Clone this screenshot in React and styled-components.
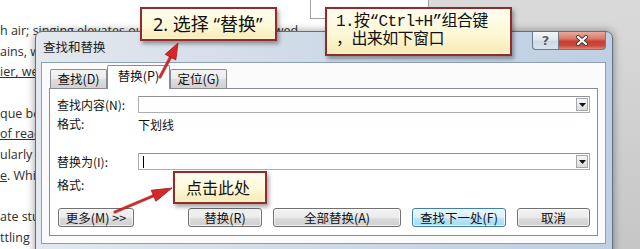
import React from "react";
import styled, { createGlobalStyle } from "styled-components";

const GlobalStyle = createGlobalStyle`
  html, body { margin: 0; padding: 0; }
  body { background: #d6d6d6; }
`;

const Stage = styled.div`
  position: relative;
  width: 640px;
  height: 249px;
  overflow: hidden;
  display: flex;
  background: #d6d6d6;
`;

const Doc = styled.div`
  width: 428px;
  flex: none;
  background: #fff;
  padding-top: 21px;
  font-family: "Open Sans", "Liberation Sans", sans-serif;
  font-size: 12.5px;
  line-height: 20.7px;
  color: #2e2e2e;
  white-space: nowrap;
  overflow: hidden;
`;

const DocLine = styled.div`
  height: 20.7px;
`;

const U = styled.span`
  text-decoration: underline;
`;

const Gray = styled.div`
  flex: 1;
  background: linear-gradient(180deg, #dadada, #c6c6c6);
`;

const TextFrame = styled.div`
  position: absolute;
  left: 310px;
  top: -1px;
  width: 117px;
  height: 18px;
  background: #fff;
  border: 1px solid #a2a2a2;
`;

const Dialog = styled.div`
  position: absolute;
  left: 35px;
  top: 31px;
  width: 578px;
  height: 228px;
  box-sizing: border-box;
  display: flex;
  flex-direction: column;
  padding: 0 6px 0 5px;
  border: 1px solid #5d7084;
  border-radius: 7px 7px 0 0;
  background: linear-gradient(90deg, #e3e8ee 0%, #d4dee9 35%, #c6d5e5 70%, #bfd0e3 100%);
  box-shadow: 0 0 9px rgba(0, 0, 0, 0.4);
  font-family: "Noto Sans CJK SC", "Noto Sans", sans-serif;
  font-size: 12px;
  color: #111;
`;

const TitleBar = styled.div`
  height: 30px;
  display: flex;
  align-items: flex-start;
`;

const Title = styled.div`
  margin: 7px 0 0 2px;
  font-size: 12.5px;
  line-height: 16px;
  color: #1c1c1c;
`;

const CaptionButtons = styled.div`
  margin-left: auto;
  display: flex;
`;

const CaptionButton = styled.div`
  height: 18px;
  box-sizing: border-box;
  display: flex;
  align-items: center;
  justify-content: center;
  border: 1px solid #6b7c90;
  border-top: none;
  width: ${(p) => (p.$close ? "47px" : "27px")};
  border-radius: ${(p) => (p.$close ? "0 0 4px 0" : "0 0 0 4px")};
  border-left: ${(p) => (p.$close ? "none" : "1px solid #6b7c90")};
  background: ${(p) =>
    p.$close
      ? "linear-gradient(180deg, #e9aa9a 0%, #d9786a 40%, #c73f31 55%, #c94a3c 80%, #dc8676 100%)"
      : "linear-gradient(180deg, #f3f6f9 0%, #e2e8ef 45%, #cfd9e4 55%, #dbe3ec 100%)"};
  color: #55606d;
  font-family: "DejaVu Sans", sans-serif;
  font-weight: bold;
  font-size: 13px;
  text-shadow: 0 0 2px #fff;
`;

const Client = styled.div`
  height: 182px;
  box-sizing: border-box;
  background: #fbfbfb;
  border: 1px solid #8c9fb4;
  padding: 2px 7px 7px 7px;
  display: flex;
  flex-direction: column;
`;

const TabStrip = styled.div`
  display: flex;
  align-items: flex-end;
  height: 24px;
  margin: 0 0 -1px 1px;
  position: relative;
  z-index: 1;
`;

const Tab = styled.div`
  box-sizing: border-box;
  width: ${(p) => p.$w}px;
  height: ${(p) => (p.$active ? "24px" : "19px")};
  margin-bottom: ${(p) => (p.$active ? "0" : "1px")};
  border: 1px solid #898c95;
  border-bottom: none;
  border-radius: 2px 2px 0 0;
  background: ${(p) =>
    p.$active
      ? "#fff"
      : "linear-gradient(180deg, #f4f4f4 0%, #ebebeb 50%, #dedede 50%, #d2d2d2 100%)"};
  display: flex;
  align-items: center;
  justify-content: center;
  padding-bottom: ${(p) => (p.$active ? "3px" : "0")};
  line-height: 14px;
  font-size: 12.5px;
`;

const Panel = styled.div`
  height: 148px;
  box-sizing: border-box;
  border: 1px solid #898c95;
  background: #fff;
  padding: 7px 7px 8px 7px;
  display: flex;
  flex-direction: column;
`;

const FieldRow = styled.div`
  display: flex;
  align-items: center;
  height: 17px;
  margin-top: ${(p) => p.$top || 0}px;
`;

const FormatRow = styled.div`
  display: flex;
  align-items: center;
  height: ${(p) => p.$h}px;
`;

const Label = styled.div`
  width: 81px;
  flex: none;
  line-height: 14px;
`;

const Input = styled.div`
  flex: 1;
  height: 17px;
  box-sizing: border-box;
  border: 1px solid #a9adb5;
  border-top-color: #8d929c;
  background: #fff;
  display: flex;
  align-items: center;
  padding: 0 1px 0 4px;
`;

const Caret = styled.div`
  width: 1px;
  height: 12px;
  background: #000;
`;

const DropButton = styled.div`
  margin-left: auto;
  width: 12px;
  height: 13px;
  box-sizing: border-box;
  border: 1px solid #a4a8ae;
  background: linear-gradient(180deg, #f7f7f7, #dcdcdc);
  display: flex;
  align-items: center;
  justify-content: center;
`;

const ButtonRow = styled.div`
  display: flex;
  margin-top: 8px;
  height: 19px;
`;

const ButtonGroup = styled.div`
  margin-left: auto;
  display: flex;
  gap: 11px;
`;

const Button = styled.div`
  width: ${(p) => p.$w}px;
  height: 19px;
  box-sizing: border-box;
  margin-left: ${(p) => p.$ml || 0}px;
  border: 1px solid ${(p) => (p.$default ? "#3c7fb1" : "#707070")};
  border-radius: 3px;
  background: ${(p) =>
    p.$default
      ? "linear-gradient(180deg, #eaf6fd 0%, #d9f0fc 50%, #bee6fd 50%, #a7d9f5 100%)"
      : "linear-gradient(180deg, #f2f2f2 0%, #ebebeb 50%, #dddddd 50%, #cfcfcf 100%)"};
  box-shadow: inset 0 0 0 1px rgba(255, 255, 255, 0.7);
  display: flex;
  align-items: center;
  justify-content: center;
  line-height: 14px;
  font-size: 12.5px;
  white-space: nowrap;
`;

const Callout = styled.div`
  position: absolute;
  left: ${(p) => p.$x}px;
  top: ${(p) => p.$y}px;
  width: ${(p) => p.$w}px;
  height: ${(p) => p.$h}px;
  box-sizing: border-box;
  border: 2px solid #962a2a;
  background: linear-gradient(180deg, #fffef0 0%, #fdf8d6 55%, #f6ebb4 100%);
  box-shadow: 2px 3px 4px rgba(0, 0, 0, 0.35), inset 0 0 3px rgba(255, 255, 255, 0.9);
  color: #111;
  font-family: "Noto Sans", "Noto Sans CJK SC", sans-serif;
  font-size: ${(p) => p.$fs}px;
  line-height: ${(p) => p.$lh}px;
  padding: ${(p) => p.$pad};
  white-space: nowrap;
  z-index: 3;
`;

const MonoCallout = styled(Callout)`
  font-family: "Liberation Mono", "Noto Sans CJK SC", monospace;
  letter-spacing: -0.6px;
`;

const Arrows = styled.svg`
  position: absolute;
  left: 0;
  top: 0;
  z-index: 4;
  pointer-events: none;
`;

// only the fragments that show beside the dialog
const docLines = [
  <>h air; singing elevates our spirits and lifts up bowed</>,
  <>ains, w</>,
  <U>ier, we</U>,
  null,
  <>que be</>,
  <U>of read</U>,
  <>ularly o</>,
  <><U>e</U>. Whi</>,
  null,
  <>ate stu</>,
  <>ttling</>,
];

function Arrow({ tail, tip, head = 16, half = 6 }) {
  const dx = tip[0] - tail[0];
  const dy = tip[1] - tail[1];
  const len = Math.hypot(dx, dy);
  const ux = dx / len;
  const uy = dy / len;
  const bx = tip[0] - ux * head;
  const by = tip[1] - uy * head;
  const px = -uy * half;
  const py = ux * half;
  const pts = `${tip[0]},${tip[1]} ${bx + px},${by + py} ${bx - px},${by - py}`;
  return (
    <g>
      <line x1={tail[0]} y1={tail[1]} x2={bx} y2={by} stroke="#7a1010" strokeWidth="3.4" strokeLinecap="round" opacity="0.5" />
      <line x1={tail[0]} y1={tail[1]} x2={bx} y2={by} stroke="#d42424" strokeWidth="2.2" strokeLinecap="round" />
      <polygon points={pts} fill="#d9262a" stroke="#9e1414" strokeWidth="0.8" />
    </g>
  );
}

const DropArrow = () => (
  <DropButton>
    <svg width="7" height="4" viewBox="0 0 7 4">
      <path d="M0 0 H7 L3.5 4 Z" fill="#111" />
    </svg>
  </DropButton>
);

export default function App() {
  return (
    <>
      <GlobalStyle />
      <Stage>
        <Doc>
          {docLines.map((l, i) => (
            <DocLine key={i}>{l}</DocLine>
          ))}
        </Doc>
        <Gray />
        <TextFrame />

        <Dialog>
          <TitleBar>
            <Title>查找和替换</Title>
            <CaptionButtons>
              <CaptionButton>?</CaptionButton>
              <CaptionButton $close>
                <svg width="14" height="11" viewBox="0 0 14 11">
                  <path d="M3 2 L11 9 M11 2 L3 9" stroke="#3a3a3a" strokeWidth="4" strokeLinecap="round" />
                  <path d="M3 2 L11 9 M11 2 L3 9" stroke="#fff" strokeWidth="2.2" strokeLinecap="round" />
                </svg>
              </CaptionButton>
            </CaptionButtons>
          </TitleBar>

          <Client>
            <TabStrip>
              <Tab $w={57}>查找(D)</Tab>
              <Tab $w={63} $active>替换(P)</Tab>
              <Tab $w={57}>定位(G)</Tab>
            </TabStrip>
            <Panel>
              <FieldRow>
                <Label>查找内容(N):</Label>
                <Input>
                  <DropArrow />
                </Input>
              </FieldRow>
              <FormatRow $h={22}>
                <Label>格式:</Label>
                <div>下划线</div>
              </FormatRow>
              <FieldRow $top={18}>
                <Label>替换为(I):</Label>
                <Input>
                  <Caret />
                  <DropArrow />
                </Input>
              </FieldRow>
              <FormatRow $h={30}>
                <Label>格式:</Label>
              </FormatRow>
              <ButtonRow>
                <Button $w={76} $ml={1}>更多(M) &gt;&gt;</Button>
                <ButtonGroup>
                  <Button $w={74}>替换(R)</Button>
                  <Button $w={128}>全部替换(A)</Button>
                  <Button $w={94} $default>查找下一处(F)</Button>
                  <Button $w={73}>取消</Button>
                </ButtonGroup>
              </ButtonRow>
            </Panel>
          </Client>
        </Dialog>

        <Callout $x={140} $y={7} $w={137} $h={34} $fs={18} $lh={26} $pad="2px 0 0 11px">
          2. 选择 “替换”
        </Callout>
        <MonoCallout $x={325} $y={7} $w={187} $h={49} $fs={16} $lh={18} $pad="4px 0 0 9px">
          1.按“Ctrl+H”组合键
          <br />
          ，出来如下窗口
        </MonoCallout>
        <Callout $x={173} $y={171} $w={94} $h={33} $fs={16} $lh={26} $pad="2px 0 0 11px">
          点击此处
        </Callout>

        <Arrows width="640" height="249" viewBox="0 0 640 249">
          <Arrow tail={[160, 77]} tip={[178, 43]} head={16} half={6} />
          <Arrow tail={[115, 212]} tip={[172, 188]} head={20} half={6} />
        </Arrows>
      </Stage>
    </>
  );
}
